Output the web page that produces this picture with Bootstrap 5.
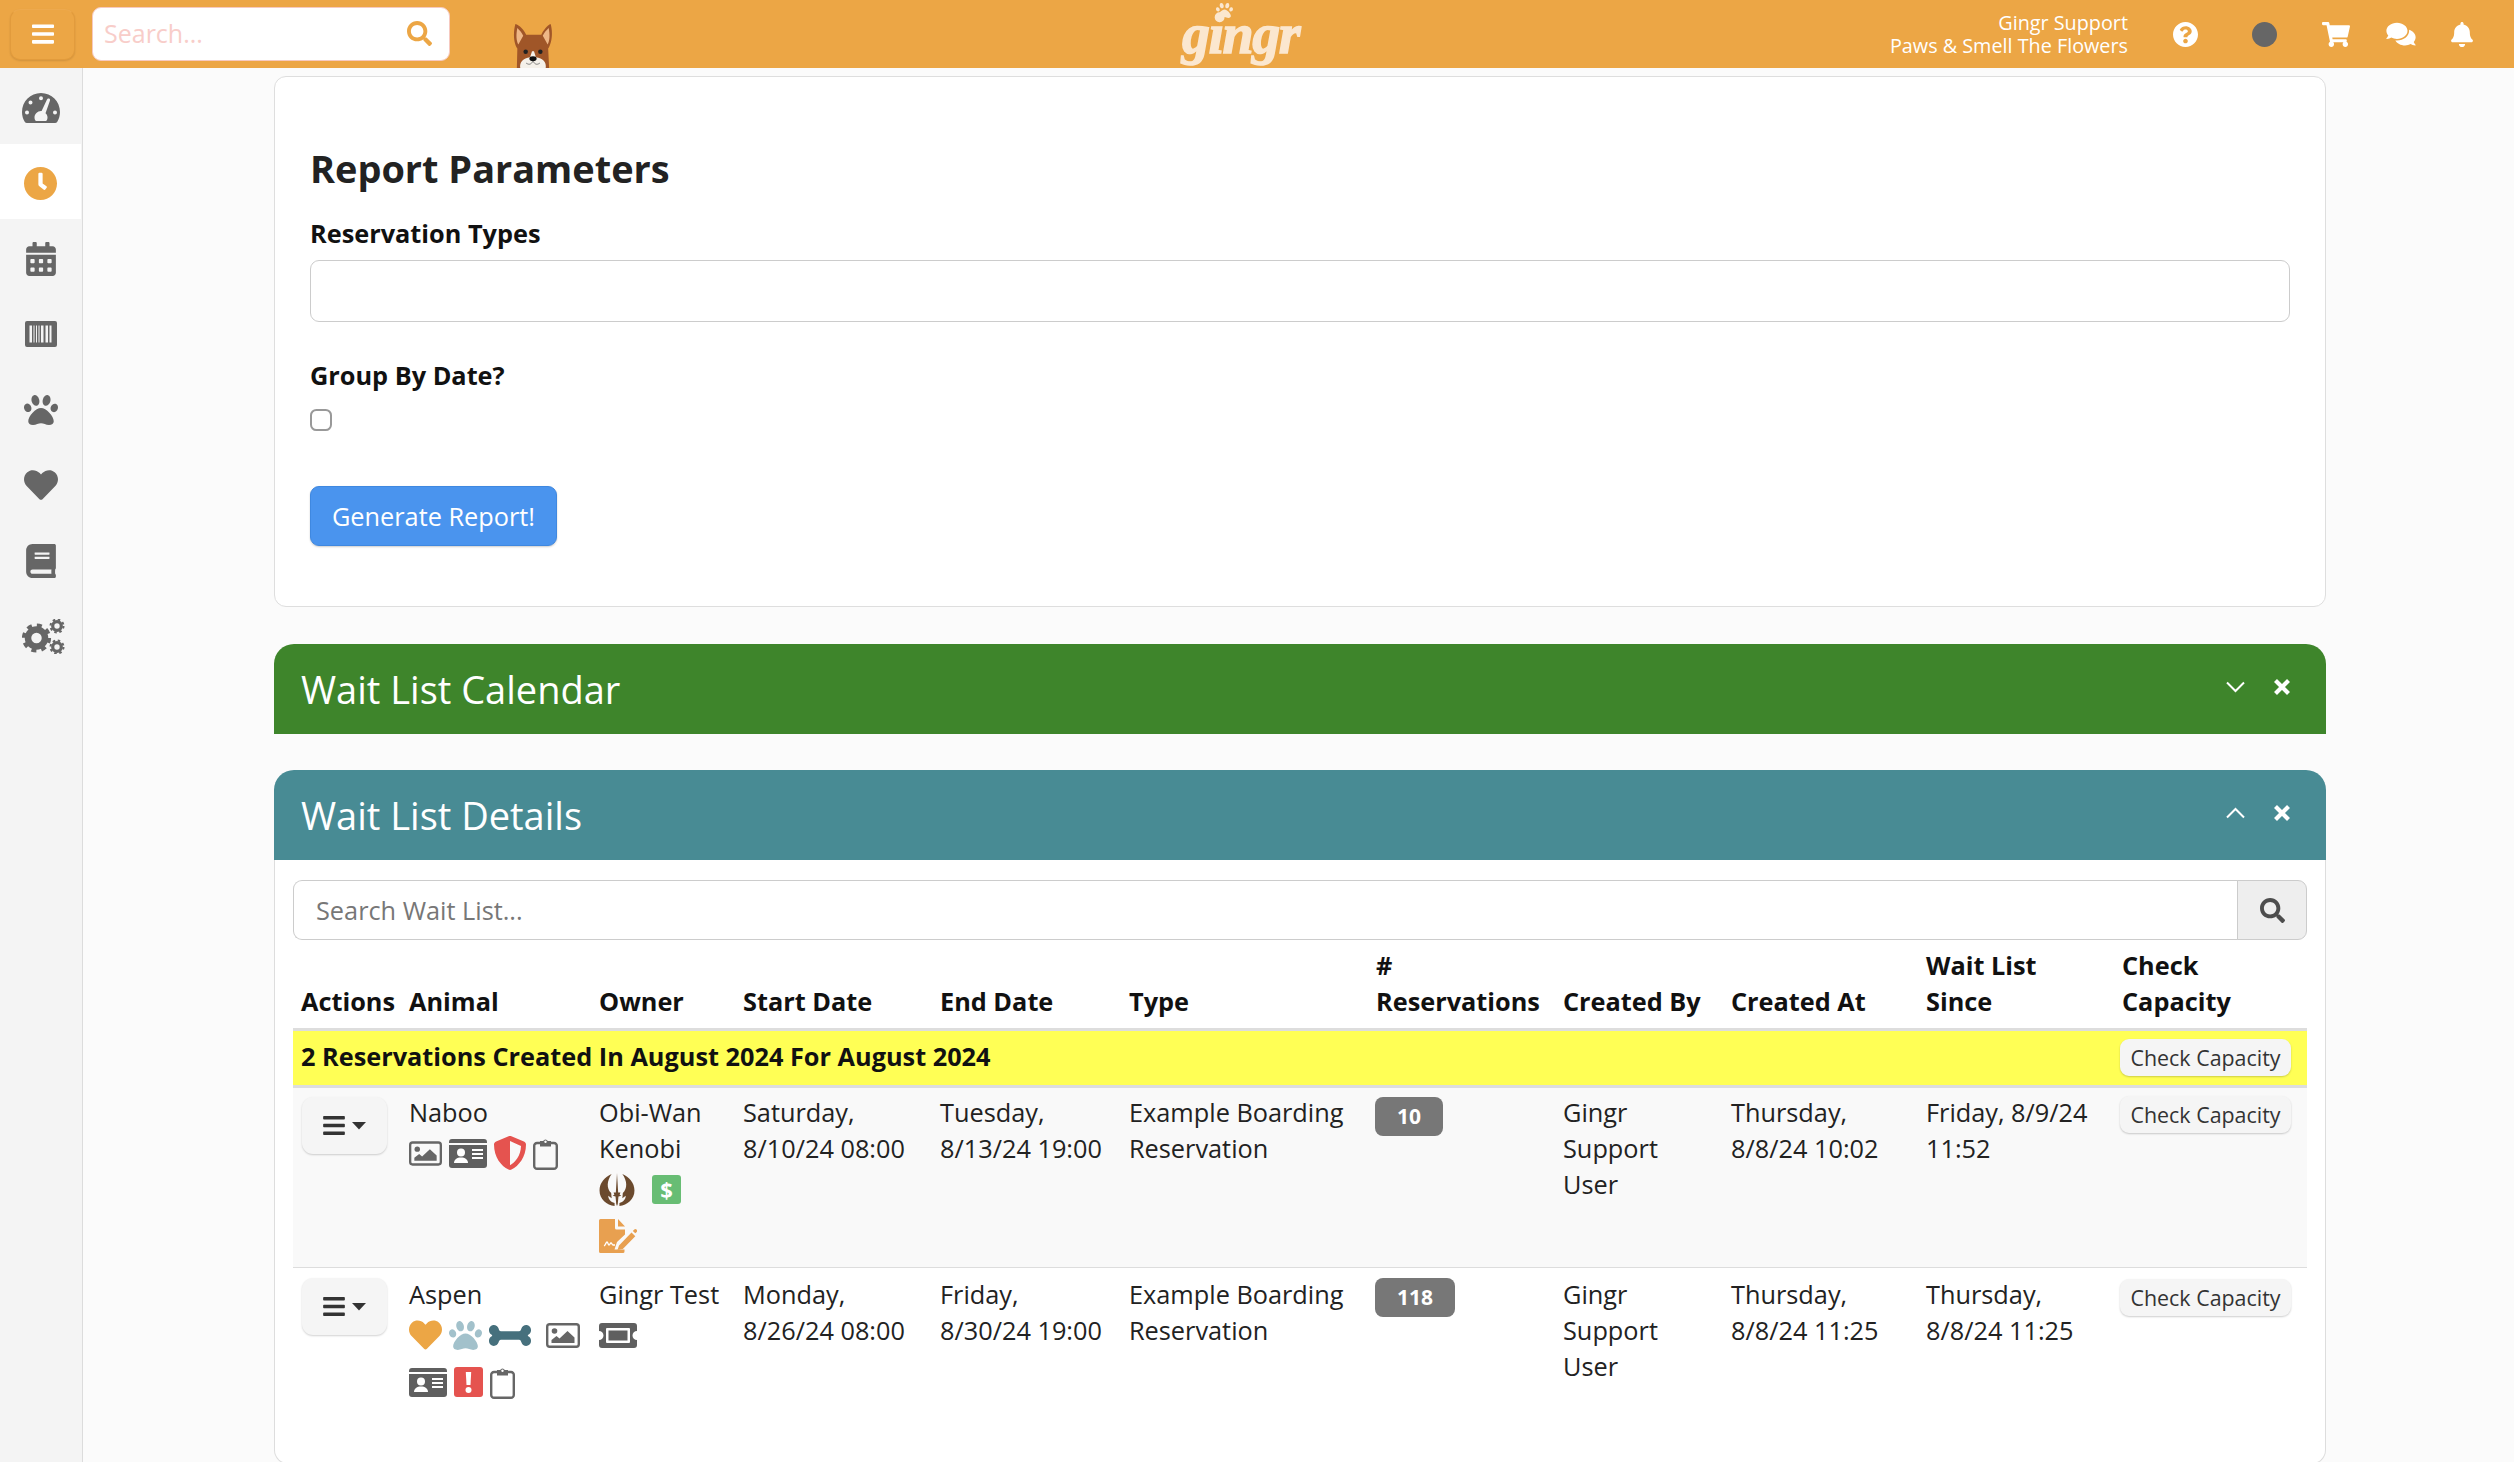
<!DOCTYPE html>
<html lang="en">
<head>
<meta charset="utf-8">
<title>Wait List Report</title>
<link href="https://cdn.jsdelivr.net/npm/bootstrap@5.3.0/dist/css/bootstrap.min.css" rel="stylesheet">
<style>
html,body{height:100%}
body{font-family:"Open Sans","Liberation Sans",sans-serif;font-size:25.3px;line-height:36px;color:#222;background:#fbfbfb;overflow:hidden;display:flex;flex-direction:column;margin:0}
.topbar{height:68px;flex:none;background:#eca645;padding:0;align-items:center;flex-wrap:nowrap;justify-content:flex-start}
.menu-btn{width:65px;height:51px;margin:0 17px 0 10px;background:#eca645;border:1px solid #e29b3c;border-top-color:#eda94e;border-radius:10px;display:flex;align-items:center;justify-content:center;box-shadow:0 1px 2px rgba(0,0,0,.12);padding:0}
.top-search{width:358px;height:54px;background:#fff;border-radius:9px;border:1px solid #f6c9c0;display:flex;align-items:center;justify-content:space-between;padding:0 17px 2px 11px;color:#f8cdc9;font-size:25px}
.dog{margin:23px 0 0 63px;align-self:flex-start}
.logo-wrap{position:absolute;left:1180px;top:0;width:126px;height:66px}
.logo-txt{position:absolute;left:2px;top:6px;font-family:"Liberation Serif",serif;font-style:italic;font-weight:700;font-size:56px;line-height:56px;letter-spacing:-1.5px;color:#fbe7cf;-webkit-text-stroke:1.4px #fbe7cf}
.logo-paw{position:absolute;left:36px;top:3px}
.top-user{margin-left:auto;text-align:right;color:#fff;font-size:19.8px;line-height:23px;margin-right:45px}
.top-icons{display:flex;align-items:center;margin-right:41px}
.ti-q{margin-right:54px}.ti-dot{margin-right:45px}.ti-cart{margin-right:36px}.ti-chat{margin-right:35px}
.shell{flex:1;display:flex;min-height:0}
.side{width:83px;flex:none;background:#f4f4f4;border-right:1px solid #dcdcdc}
.side-item{height:75.5px;display:flex;align-items:center;justify-content:center;padding-top:4px;margin-right:1px}
.side-item.on{background:#fff;padding-top:5px}
.side-cogs{padding-left:5px}
.content{flex:1;min-width:0;padding:8px 188px 0 191px;overflow:hidden}
.param-card{border:1px solid #dedede;border-radius:12px;background:#fff;padding:69px 35px 60px;height:531px;box-shadow:none}
.param-title{font-size:37.9px;line-height:44px;font-weight:700;margin:0 0 25px;color:#222}
.param-label{font-weight:700;font-size:25.3px;line-height:36px;margin:0 0 9px;color:#111;display:block}
.param-input{height:62px;border:1px solid #ccc;border-radius:9px;margin-bottom:35px}
.param-check{width:22px;height:22px;margin:7px 0 55px 0;border:2px solid #999;border-radius:5px;display:block}
.gen-btn{display:block;width:247px;height:60px;background:#4a94ee;border:1px solid #3f88e0;border-radius:9px;color:#fff;font-size:25.3px;padding:1px 0 0;box-shadow:0 1px 2px rgba(0,0,0,.2)}
.panel-card{border:0;border-radius:20px 20px 0 0;background:transparent;margin-top:37px}
.panel-bar{height:90px;padding:0 27px;display:flex;align-items:center;color:#fff;font-size:38px;line-height:44px;border:0;border-radius:20px 20px 0 0}
.panel-bar:first-child{border-radius:20px 20px 0 0}
.bar-green{background:#3e852b}
.bar-teal{background:#488b94}
.bar-ctl{margin-left:auto;display:flex;align-items:center;margin-top:-4px}
.bar-chev{margin-right:29px}
.bar-x{margin-right:9px}
.panel-card+.panel-card{margin-top:36px}
.panel-body{background:#fff;border:1px solid #ddd;border-top:0;border-radius:0 0 14px 14px;padding:20px 18px 0;height:604px}
.wl-group{height:60px}
.wl-input{border:1px solid #ccc;border-right:0;border-radius:9px 0 0 9px;font-size:25.3px;padding:1px 22px 0;color:#666}
.wl-input::placeholder{color:#777}
.wl-btn{width:70px;background:#eee;border:1px solid #ccc;border-radius:0 9px 9px 0;display:flex;align-items:center;justify-content:center;padding:0}
.wl-table{table-layout:fixed;width:2014px;margin:0;font-size:25.3px;line-height:36px;color:#222;border-collapse:collapse}
.wl-table th,.wl-table td{padding:8px 6px 9px 8px;border:0;background:transparent;box-shadow:none;vertical-align:top}
.wl-table thead th{vertical-align:bottom;font-weight:700;color:#111;border-bottom:3px solid #ddd;padding:7px 0 9px 8px;white-space:nowrap}
.wl-table tr.yel td{background:#ffff55;font-weight:700;color:#111;padding:7px 7px 11px 8px;border-bottom:3px solid #ddd;height:57px}
.wl-table tr.yel td.cap{padding:8px 10px 0 6px;font-weight:400}
.wl-table tr.odd td{background:#f9f9f9;border-bottom:1px solid #ddd;padding-top:6px}
.wl-table td.cap{padding:11px 6px 0}
.wl-table tr.odd td.cap{padding:8px 6px 0}
.wl-table td.act{padding:10px 6px 0 9px}
.wl-table tr.odd td.act{padding:9px 6px 0 9px}
.act-btn{width:85px;height:57px;background:#f5f5f5;border:0;border-radius:11px;box-shadow:0 1px 2px rgba(0,0,0,.18);display:flex;align-items:center;justify-content:center;gap:7px;padding:0}
.cap-btn{display:block;width:171px;height:37px;background:#f5f5f5;border:0;border-radius:9px;box-shadow:0 1px 2px rgba(0,0,0,.2);font-size:21.4px;line-height:36px;color:#333;padding:0;white-space:nowrap}
.count-pill{display:inline-block;background:#777;color:#fff;font-weight:700;font-size:21px;line-height:39px;height:39px;padding:0 22px;border-radius:8px;margin:2px 0 0 -1px}
.odd .count-pill{margin-top:3px}
.ic-wrap{display:flex;flex-wrap:wrap;column-gap:7px;row-gap:3px;margin-top:1px}
.ic-narrow{max-width:110px}
.ibx{height:44px;display:flex;align-items:center}
.gap-big{margin-right:8px}
.gap-jedi{margin-right:10px}
.dollar-box{width:29px;height:29px;background:#68bd74;border-radius:3px;color:#fff;font-weight:700;font-size:22px;line-height:29px;text-align:center;display:block}
.nowrap-cell{white-space:nowrap}
.c1{width:108px}.c2{width:190px}.c3{width:144px}.c4{width:197px}.c5{width:189px}.c6{width:247px}.c7{width:187px}.c8{width:168px}.c9{width:195px}.c10{width:196px}.c11{width:193px}
</style>
</head>
<body>
<svg width="0" height="0" class="position-absolute">
<defs>
<symbol id="i-bars" viewBox="0 60 448 392"><path d="M16 132h416c8.837 0 16-7.163 16-16V76c0-8.837-7.163-16-16-16H16C7.163 60 0 67.163 0 76v40c0 8.837 7.163 16 16 16zm0 160h416c8.837 0 16-7.163 16-16v-40c0-8.837-7.163-16-16-16H16c-8.837 0-16 7.163-16 16v40c0 8.837 7.163 16 16 16zm0 160h416c8.837 0 16-7.163 16-16v-40c0-8.837-7.163-16-16-16H16c-8.837 0-16 7.163-16 16v40c0 8.837 7.163 16 16 16z"/></symbol>
<symbol id="i-search" viewBox="0 0 512 512"><path d="M505 442.7L405.3 343c-4.5-4.5-10.6-7-17-7H372c27.6-35.3 44-79.7 44-128C416 93.1 322.9 0 208 0S0 93.1 0 208s93.1 208 208 208c48.3 0 92.7-16.4 128-44v16.3c0 6.4 2.5 12.5 7 17l99.7 99.7c9.4 9.4 24.6 9.4 33.9 0l28.3-28.3c9.4-9.4 9.4-24.6.1-34zM208 336c-70.7 0-128-57.2-128-128 0-70.7 57.2-128 128-128 70.7 0 128 57.2 128 128 0 70.7-57.2 128-128 128z"/></symbol>
<symbol id="i-q" viewBox="8 8 496 496"><path d="M504 256c0 136.997-111.043 248-248 248S8 392.997 8 256C8 119.083 119.043 8 256 8s248 111.083 248 248zM262.655 90c-54.497 0-89.255 22.957-116.549 63.758-3.536 5.286-2.353 12.415 2.715 16.258l34.699 26.31c5.205 3.947 12.621 3.008 16.665-2.122 17.864-22.658 30.113-35.797 57.303-35.797 20.429 0 45.698 13.148 45.698 32.958 0 14.976-12.363 22.667-32.534 33.976C247.128 238.528 216 254.941 216 296v4c0 6.627 5.373 12 12 12h56c6.627 0 12-5.373 12-12v-1.333c0-28.462 83.186-29.647 83.186-106.667 0-58.002-60.165-102-116.531-102zM256 338c-25.365 0-46 20.635-46 46 0 25.364 20.635 46 46 46s46-20.636 46-46c0-25.365-20.635-46-46-46z"/></symbol>
<symbol id="i-cart" viewBox="0 0 576 512"><path d="M528.12 301.319l47.273-208C578.806 78.301 567.391 64 551.99 64H159.208l-9.166-44.81C147.758 8.021 137.93 0 126.529 0H24C10.745 0 0 10.745 0 24v16c0 13.255 10.745 24 24 24h69.883l70.248 343.435C147.325 417.1 136 435.222 136 456c0 30.928 25.072 56 56 56s56-25.072 56-56c0-15.674-6.447-29.835-16.824-40h209.647C430.447 426.165 424 440.326 424 456c0 30.928 25.072 56 56 56s56-25.072 56-56c0-22.172-12.888-41.332-31.579-50.405l5.517-24.276c3.413-15.018-8.002-29.319-23.403-29.319H218.117l-6.545-32h293.145c11.206 0 20.92-7.754 23.403-18.681z"/></symbol>
<symbol id="i-comments" viewBox="0 0 576 512"><path d="M416 192c0-88.4-93.1-160-208-160S0 103.6 0 192c0 34.3 14.1 65.9 38 92-13.4 30.2-35.5 54.2-35.8 54.5-2.2 2.3-2.8 5.7-1.5 8.7S4.8 352 8 352c36.6 0 66.9-12.3 88.7-25 32.2 15.7 70.3 25 111.3 25 114.9 0 208-71.6 208-160zm122 220c23.9-26 38-57.7 38-92 0-66.9-53.5-124.2-129.3-148.1.9 6.6 1.3 13.3 1.3 20.1 0 105.9-107.7 192-240 192-10.8 0-21.3-.8-31.7-1.9C207.8 439.6 281.8 480 368 480c41 0 79.1-9.2 111.3-25 21.8 12.7 52.1 25 88.7 25 3.2 0 6.1-1.9 7.3-4.8 1.3-2.9.7-6.3-1.5-8.7-.3-.3-22.4-24.2-35.8-54.5z"/></symbol>
<symbol id="i-bell" viewBox="0 0 448 512"><path d="M224 512c35.32 0 63.97-28.65 63.97-64H160.03c0 35.35 28.65 64 63.97 64zm215.39-149.71c-19.32-20.76-55.47-51.99-55.47-154.29 0-77.7-54.48-139.9-127.94-155.16V32c0-17.67-14.32-32-31.98-32s-31.98 14.33-31.98 32v20.84C118.56 68.1 64.08 130.3 64.08 208c0 102.3-36.15 133.53-55.47 154.29-6 6.45-8.66 14.16-8.61 21.71.11 16.4 12.98 32 32.1 32h383.8c19.12 0 32-15.6 32.1-32 .05-7.55-2.61-15.27-8.61-21.71z"/></symbol>
<symbol id="i-heart" viewBox="0 30 512 452"><path d="M462.3 62.6C407.5 15.9 326 24.3 275.7 76.2L256 96.5l-19.7-20.3C186.1 24.3 104.5 15.9 49.7 62.6c-62.8 53.6-66.1 149.8-9.9 207.9l193.5 199.8c12.5 12.9 32.8 12.9 45.3 0l193.5-199.8c56.3-58.1 53-154.3-9.8-207.9z"/></symbol>
<symbol id="i-paw" viewBox="0 32 512 448"><path d="M256 224c-79.41 0-192 122.76-192 200.25 0 34.9 26.81 55.75 71.74 55.75 48.84 0 81.09-25.08 120.26-25.08 39.51 0 71.85 25.08 120.26 25.08 44.93 0 71.74-20.85 71.74-55.75C448 346.76 335.41 224 256 224zm-147.28-12.61c-10.4-34.65-42.44-57.09-71.56-50.13-29.12 6.96-44.29 40.69-33.89 75.34 10.4 34.65 42.44 57.09 71.56 50.13 29.12-6.96 44.29-40.69 33.89-75.34zm84.72-20.78c30.94-8.14 46.42-49.94 34.58-93.36s-46.52-72.01-77.46-63.87-46.42 49.94-34.58 93.36c11.84 43.42 46.52 72.01 77.46 63.87zm281.39-29.34c-29.12-6.96-61.15 15.48-71.56 50.13-10.4 34.65 4.77 68.38 33.89 75.34 29.12 6.96 61.15-15.48 71.56-50.13 10.4-34.65-4.77-68.38-33.89-75.34zm-156.27 29.34c30.94 8.14 65.62-20.45 77.46-63.87 11.84-43.42-3.64-85.21-34.58-93.36s-65.62 20.45-77.46 63.87c-11.84 43.42 3.64 85.22 34.58 93.36z"/></symbol>
<symbol id="i-bone" viewBox="0 96 640 320"><path d="M598.88 244.56c25.2-12.6 41.12-38.36 41.12-66.53v-7.64C640 129.3 606.7 96 565.61 96c-32.02 0-60.44 20.49-70.57 50.86-7.68 23.03-11.6 45.14-38.11 45.14H183.06c-27.38 0-31.58-25.54-38.11-45.14C134.83 116.49 106.4 96 74.39 96 33.3 96 0 129.3 0 170.39v7.64c0 28.17 15.92 53.93 41.12 66.53 9.43 4.71 9.43 18.17 0 22.88C15.92 279.04 0 304.8 0 332.97v7.64C0 381.7 33.3 415 74.38 415c32.02 0 60.44-20.49 70.57-50.86 7.68-23.03 11.6-45.14 38.11-45.14h273.87c27.38 0 31.58 25.54 38.11 45.14C505.17 395.51 533.6 416 565.61 416c41.08 0 74.38-33.3 74.38-74.39v-7.64c0-28.18-15.92-53.93-41.12-66.53-9.42-4.71-9.42-18.17.01-22.88z"/></symbol>
<symbol id="i-book" viewBox="0 0 448 512"><path d="M448 360V24c0-13.3-10.7-24-24-24H96C43 0 0 43 0 96v320c0 53 43 96 96 96h328c13.3 0 24-10.7 24-24v-16c0-7.5-3.5-14.3-8.9-18.7-4.2-15.4-4.2-59.3 0-74.7 5.4-4.3 8.9-11.1 8.9-18.6zM128 134c0-3.3 2.7-6 6-6h212c3.3 0 6 2.7 6 6v20c0 3.3-2.7 6-6 6H134c-3.3 0-6-2.7-6-6v-20zm0 64c0-3.3 2.7-6 6-6h212c3.3 0 6 2.7 6 6v20c0 3.3-2.7 6-6 6H134c-3.3 0-6-2.7-6-6v-20zm253.4 250H96c-17.7 0-32-14.3-32-32 0-17.6 14.4-32 32-32h285.4c-1.9 17.1-1.9 46.9 0 64z"/></symbol>
<symbol id="i-clock" viewBox="8 8 496 496"><path d="M256,8C119,8,8,119,8,256S119,504,256,504,504,393,504,256,393,8,256,8Zm92.49,313h0l-20,25a16,16,0,0,1-22.49,2.5h0l-67-49.72a40,40,0,0,1-15-31.23V112a16,16,0,0,1,16-16h32a16,16,0,0,1,16,16V256l58,42.5A16,16,0,0,1,348.49,321Z"/></symbol>
<symbol id="i-cal" viewBox="0 0 448 512"><path d="M0 464c0 26.5 21.5 48 48 48h352c26.5 0 48-21.5 48-48V192H0v272zm320-196c0-6.6 5.4-12 12-12h40c6.6 0 12 5.4 12 12v40c0 6.6-5.4 12-12 12h-40c-6.6 0-12-5.4-12-12v-40zm0 128c0-6.6 5.4-12 12-12h40c6.6 0 12 5.4 12 12v40c0 6.6-5.4 12-12 12h-40c-6.6 0-12-5.4-12-12v-40zM192 268c0-6.6 5.4-12 12-12h40c6.6 0 12 5.4 12 12v40c0 6.6-5.4 12-12 12h-40c-6.6 0-12-5.4-12-12v-40zm0 128c0-6.6 5.4-12 12-12h40c6.6 0 12 5.4 12 12v40c0 6.6-5.4 12-12 12h-40c-6.6 0-12-5.4-12-12v-40zM64 268c0-6.6 5.4-12 12-12h40c6.6 0 12 5.4 12 12v40c0 6.6-5.4 12-12 12H76c-6.6 0-12-5.4-12-12v-40zm0 128c0-6.6 5.4-12 12-12h40c6.6 0 12 5.4 12 12v40c0 6.6-5.4 12-12 12H76c-6.6 0-12-5.4-12-12v-40zM400 64h-48V16c0-8.8-7.2-16-16-16h-32c-8.8 0-16 7.2-16 16v48H160V16c0-8.8-7.2-16-16-16h-32c-8.8 0-16 7.2-16 16v48H48C21.5 64 0 85.5 0 112v48h448v-48c0-26.5-21.5-48-48-48z"/></symbol>
<symbol id="i-tach" viewBox="0 0 38 30"><path fill-rule="evenodd" d="M19 0C8.5 0 0 8.5 0 19c0 3.5 1 7 2.7 9.8.5.8 1.300 1.200 2.300 1.200h28c1 0 1.800-.4 2.300-1.200C37 26 38 22.500 38 19 38 8.500 29.500 0 19 0zM19 3.200a2 2 0 1 1 0 4 2 2 0 0 1 0-4zM8.500 7.500a2 2 0 1 1 0 4 2 2 0 0 1 0-4zM5 17.500a2 2 0 1 1 0 4 2 2 0 0 1 0-4zm28 0a2 2 0 1 1 0 4 2 2 0 0 1 0-4zM27 5.500c.9.3 1.300 1.200 1 2l-4.500 12.800c1.200 1 2 2.500 2 4.200 0 1-.2 2-.7 2.800-.2.400-.6.700-1 .700H14.200c-.4 0-.8-.3-1-.7-.5-.8-.7-1.800-.7-2.800 0-3.500 3-6.500 6.500-6.500h.6L25 6.500c.3-.8 1.200-1.300 2-1z"/></symbol>
<symbol id="i-bar" viewBox="0 0 32 26"><path fill-rule="evenodd" d="M2 0h28a2 2 0 0 1 2 2v22a2 2 0 0 1-2 2H2a2 2 0 0 1-2-2V2a2 2 0 0 1 2-2zM4.500 4.500v17h2.500v-17zm4 0v17h1v-17zm2.500 0v17h1v-17zm2.500 0v17h1v-17zm2.500 0v17h2.500v-17zm4.500 0v17h2.500v-17zm4 0v17h2v-17z"/></symbol>
<symbol id="i-cogs" viewBox="0 0 43 35"><g fill="none" stroke="currentColor"><circle cx="14.500" cy="19" r="8.500" stroke-width="6.500"/><circle cx="14.500" cy="19" r="12.800" stroke-width="3.600" stroke-dasharray="5 5.050"/><circle cx="35" cy="7" r="4.300" stroke-width="3.200"/><circle cx="35" cy="7" r="6.500" stroke-width="2" stroke-dasharray="2.500 2.600"/><circle cx="35" cy="28" r="4.300" stroke-width="3.200"/><circle cx="35" cy="28" r="6.500" stroke-width="2" stroke-dasharray="2.500 2.600"/></g></symbol>
<symbol id="i-img" viewBox="0 0 34 25"><rect x="1.200" y="1.200" width="31.600" height="22.600" rx="2.500" fill="none" stroke="#666" stroke-width="2.400"/><circle cx="8.500" cy="8" r="2.800" fill="#666"/><path fill="#666" d="M5.500 20v-3l5-4 3 2.500 8-7.500 7 6.500V20z"/></symbol>
<symbol id="i-idc" viewBox="0 0 38 29"><path fill="#5f5f5f" d="M0 6h38v20a3 3 0 0 1-3 3H3a3 3 0 0 1-3-3zM3 0h32a3 3 0 0 1 3 3v1H0V3a3 3 0 0 1 3-3z"/><circle cx="12" cy="13.500" r="4" fill="#fff"/><path fill="#fff" d="M5 24c0-3.500 3-5.500 7-5.500s7 2 7 5.500z"/><path stroke="#fff" stroke-width="1.800" d="M23 11h11M23 15h11M23 19h11"/></symbol>
<symbol id="i-shield" viewBox="0 0 32 34"><path fill="#e5534f" d="M16 0c.5 0 1 .1 1.400.3l12.500 5.200C31.100 6 32 7.200 32 8.500 32 21 24.700 30 17.500 33.600c-1 .5-2 .5-3 0C7 30 0 21 0 8.500 0 7.200.9 6 2.100 5.500L14.600.3C15 .1 15.500 0 16 0zm0 5v24.200c5-2.700 10.800-9.200 11-19.200z"/></symbol>
<symbol id="i-clip" viewBox="0 0 25 33"><path fill="none" stroke="#666" stroke-width="2.400" d="M7 6H4a2.800 2.800 0 0 0-2.800 2.800V29A2.800 2.800 0 0 0 4 31.800h17a2.800 2.800 0 0 0 2.800-2.800V8.800A2.800 2.800 0 0 0 21 6h-3"/><path fill="#666" d="M7 4h3.200a2.500 2.500 0 0 1 4.600 0H18v5.500H7z"/><circle cx="12.500" cy="4.800" r="1.200" fill="#fff"/></symbol>
<symbol id="i-tick" viewBox="0 0 38 25"><path fill="#5f5f5f" fill-rule="evenodd" d="M3 0h32a3 3 0 0 1 3 3v5a4.500 4.500 0 0 0 0 9v5a3 3 0 0 1-3 3H3a3 3 0 0 1-3-3v-5a4.500 4.500 0 0 0 0-9V3a3 3 0 0 1 3-3zm5 5a1 1 0 0 0-1 1v13a1 1 0 0 0 1 1h22a1 1 0 0 0 1-1V6a1 1 0 0 0-1-1zm1.500 2.500h19v10h-19z"/></symbol>
<symbol id="i-jedi" viewBox="0 0 36 34"><path fill="#6b4a2e" d="M12.500 1C5.500 4 0 10 0 18c0 9 7.500 15 15.500 16v-3c-4-1-6.500-4-6.500-7.500l3.500 2.500-.5-5.500C7 16 7.500 8 12.500 1zM23.500 1C30.500 4 36 10 36 18c0 9-7.500 15-15.500 16v-3c4-1 6.500-4 6.500-7.500L23.500 26l.5-5.500C29 16 28.500 8 23.500 1z"/><path fill="#6b4a2e" d="M18 0l1.200 20h2.300l-.8 2.500 1.800 1-3 .8-.7 7.700-.8 2-.8-2-.7-7.700-3-.8 1.800-1-.8-2.500h2.300z"/></symbol>
<symbol id="i-sign" viewBox="0 0 38 34"><path fill="#e8a050" d="M1.500 0H16v9a1.500 1.500 0 0 0 1.500 1.500H26v5L18 23l-2.500 7.500h10v2A1.500 1.500 0 0 1 24 34H1.500A1.500 1.500 0 0 1 0 32.500v-31A1.500 1.500 0 0 1 1.500 0zM19 0l7 7.500h-7z"/><path fill="#e8a050" d="M20 26.500L32.500 13.500l3.800 3.800L23.800 30 18.500 31zM33.800 12l1.500-1.500c.7-.7 1.600-.7 2.200 0l.2.200c.6.700.6 1.500 0 2.200l-1.400 1.400z"/><path fill="none" stroke="#fff" stroke-width="1.300" d="M5 27c1.500-.5 2-4 3-4s1 3 2 3 1-2 2-2 1 2 2 2h2"/></symbol>
<symbol id="i-alert" viewBox="0 0 29 30"><rect width="29" height="30" rx="3" fill="#e5534f"/><path fill="#fff" d="M11.800 5h5.400l-.7 13h-4z"/><circle cx="14.500" cy="23" r="3" fill="#fff"/></symbol>
<symbol id="i-dog" viewBox="0 0 40 46"><path fill="#a05628" d="M2 1C-1 12 1 22 4 26l-.5 20h33l-1-20c3-4 5.500-15 2.500-25-3 1-8 7-9.500 11H13C11 7 6 2 2 1z"/><path fill="#eeb786" d="M4 5C2.500 12 3 18 5 22l5-9C9 10 6 7 4 5zM36 5c1.500 7 1 13-1 17l-5-9c1-3 4-6 6-8z"/><path fill="#f5f1ea" d="M7 46c-1-6 3-10 10-11l2-6h2l2 6c7 1 11 5 10 11z"/><circle cx="12.500" cy="29.500" r="2.300" fill="#222"/><circle cx="27.500" cy="29.500" r="2.300" fill="#222"/><ellipse cx="20" cy="36.500" rx="3.700" ry="2.500" fill="#111"/><path fill="none" stroke="#666" stroke-width=".8" d="M13 41c3 2 5 1.500 7-2 2 3.500 4 4 7 2"/></symbol>
</defs>
</svg>

<nav class="navbar topbar position-relative">
  <button class="menu-btn" type="button" aria-label="Menu"><svg width="22" height="20" fill="#fff"><use href="#i-bars"/></svg></button>
  <div class="top-search"><span>Search...</span><svg width="25" height="25" fill="#eca645"><use href="#i-search"/></svg></div>
  <svg class="dog" width="40" height="45"><use href="#i-dog"/></svg>
  <div class="logo-wrap">
    <span class="logo-txt">gingr</span>
    <svg class="logo-paw" width="17" height="15" fill="#fbe7cf"><use href="#i-paw"/></svg>
  </div>
  <div class="top-user">Gingr Support<br>Paws &amp; Smell The Flowers</div>
  <div class="top-icons">
    <svg width="25" height="25" fill="#fff" class="ti-q"><use href="#i-q"/></svg>
    <svg width="25" height="25" fill="#666" class="ti-dot"><circle cx="12.500" cy="12.500" r="12.500"/></svg>
    <svg width="28" height="25" fill="#fff" class="ti-cart"><use href="#i-cart"/></svg>
    <svg width="30" height="26" fill="#fff" class="ti-chat"><use href="#i-comments"/></svg>
    <svg width="22" height="25" fill="#fff"><use href="#i-bell"/></svg>
  </div>
</nav>

<div class="shell">
  <aside class="side">
    <div class="side-item"><svg width="38" height="30" fill="#666"><use href="#i-tach"/></svg></div>
    <div class="side-item on"><svg width="33" height="33" fill="#eca645"><use href="#i-clock"/></svg></div>
    <div class="side-item"><svg width="30" height="34" fill="#666"><use href="#i-cal"/></svg></div>
    <div class="side-item"><svg width="32" height="26" fill="#666"><use href="#i-bar"/></svg></div>
    <div class="side-item"><svg width="34" height="30" fill="#666"><use href="#i-paw"/></svg></div>
    <div class="side-item"><svg width="34" height="30" fill="#666"><use href="#i-heart"/></svg></div>
    <div class="side-item"><svg width="30" height="34" fill="#666"><use href="#i-book"/></svg></div>
    <div class="side-item side-cogs"><svg width="43" height="35" color="#666"><use href="#i-cogs"/></svg></div>
  </aside>

  <main class="content">
    <section class="card param-card">
      <h3 class="param-title">Report Parameters</h3>
      <label class="param-label">Reservation Types</label>
      <input class="form-control param-input" type="text" aria-label="Reservation Types">
      <label class="param-label">Group By Date?</label>
      <input class="form-check-input param-check" type="checkbox" aria-label="Group By Date?">
      <button class="btn btn-primary gen-btn" type="button">Generate Report!</button>
    </section>

    <section class="card panel-card">
      <div class="card-header panel-bar bar-green">
        <span>Wait List Calendar</span>
        <span class="bar-ctl">
          <svg class="bar-chev" width="19" height="12" fill="none" stroke="#fff" stroke-width="2"><path d="M1 1.500l8.500 8.500L18 1.500"/></svg>
          <svg class="bar-x" width="16" height="16" viewBox="0 0 16 16" fill="none" stroke="#fff" stroke-width="4.200"><path d="M1.500 1.500l13 13M14.500 1.500l-13 13"/></svg>
        </span>
      </div>
    </section>

    <section class="card panel-card">
      <div class="card-header panel-bar bar-teal">
        <span>Wait List Details</span>
        <span class="bar-ctl">
          <svg class="bar-chev" width="19" height="12" fill="none" stroke="#fff" stroke-width="2"><path d="M1 10.500L9.500 2 18 10.500"/></svg>
          <svg class="bar-x" width="16" height="16" viewBox="0 0 16 16" fill="none" stroke="#fff" stroke-width="4.200"><path d="M1.500 1.500l13 13M14.500 1.500l-13 13"/></svg>
        </span>
      </div>
      <div class="panel-body">
        <div class="input-group wl-group">
          <input class="form-control wl-input" type="text" placeholder="Search Wait List...">
          <button class="btn wl-btn" type="button" aria-label="Search"><svg width="25" height="25" fill="#4d4d4d"><use href="#i-search"/></svg></button>
        </div>
        <table class="table wl-table">
          <colgroup><col class="c1"><col class="c2"><col class="c3"><col class="c4"><col class="c5"><col class="c6"><col class="c7"><col class="c8"><col class="c9"><col class="c10"><col class="c11"></colgroup>
          <thead>
            <tr>
              <th>Actions</th><th>Animal</th><th>Owner</th><th>Start Date</th><th>End Date</th><th>Type</th><th>#<br>Reservations</th><th>Created By</th><th>Created At</th><th>Wait List<br>Since</th><th>Check<br>Capacity</th>
            </tr>
          </thead>
          <tbody>
            <tr class="yel">
              <td colspan="10">2 Reservations Created In August 2024 For August 2024</td>
              <td class="cap"><button class="btn cap-btn" type="button">Check Capacity</button></td>
            </tr>
            <tr class="odd">
              <td class="act"><button class="btn act-btn" type="button" aria-label="Actions"><svg width="22" height="19" fill="#333"><use href="#i-bars"/></svg><svg width="14" height="8" fill="#333"><path d="M0 0h14L7 7.500z"/></svg></button></td>
              <td>Naboo
                <div class="ic-wrap">
                  <span class="ibx"><svg width="33" height="25"><use href="#i-img"/></svg></span>
                  <span class="ibx"><svg width="38" height="29"><use href="#i-idc"/></svg></span>
                  <span class="ibx"><svg width="32" height="34"><use href="#i-shield"/></svg></span>
                  <span class="ibx"><svg width="25" height="33"><use href="#i-clip"/></svg></span>
                </div>
              </td>
              <td>Obi-Wan Kenobi
                <div class="ic-wrap ic-narrow">
                  <span class="ibx gap-jedi"><svg width="36" height="33"><use href="#i-jedi"/></svg></span>
                  <span class="ibx"><span class="dollar-box">$</span></span>
                  <span class="ibx"><svg width="38" height="34"><use href="#i-sign"/></svg></span>
                </div>
              </td>
              <td>Saturday,<br>8/10/24 08:00</td>
              <td>Tuesday,<br>8/13/24 19:00</td>
              <td>Example Boarding Reservation</td>
              <td><span class="count-pill">10</span></td>
              <td>Gingr Support User</td>
              <td>Thursday,<br>8/8/24 10:02</td>
              <td>Friday, 8/9/24 11:52</td>
              <td class="cap"><button class="btn cap-btn" type="button">Check Capacity</button></td>
            </tr>
            <tr>
              <td class="act"><button class="btn act-btn" type="button" aria-label="Actions"><svg width="22" height="19" fill="#333"><use href="#i-bars"/></svg><svg width="14" height="8" fill="#333"><path d="M0 0h14L7 7.500z"/></svg></button></td>
              <td>Aspen
                <div class="ic-wrap">
                  <span class="ibx"><svg width="33" height="30" fill="#eca645"><use href="#i-heart"/></svg></span>
                  <span class="ibx"><svg width="33" height="29" fill="#a2c1cb"><use href="#i-paw"/></svg></span>
                  <span class="ibx gap-big"><svg width="42" height="21" fill="#46707d"><use href="#i-bone"/></svg></span>
                  <span class="ibx"><svg width="34" height="25"><use href="#i-img"/></svg></span>
                  <span class="ibx"><svg width="38" height="29"><use href="#i-idc"/></svg></span>
                  <span class="ibx"><svg width="29" height="30"><use href="#i-alert"/></svg></span>
                  <span class="ibx"><svg width="25" height="33"><use href="#i-clip"/></svg></span>
                </div>
              </td>
              <td><span class="nowrap-cell">Gingr Test</span>
                <div class="ic-wrap">
                  <span class="ibx"><svg width="38" height="25"><use href="#i-tick"/></svg></span>
                </div>
              </td>
              <td>Monday,<br>8/26/24 08:00</td>
              <td>Friday,<br>8/30/24 19:00</td>
              <td>Example Boarding Reservation</td>
              <td><span class="count-pill">118</span></td>
              <td>Gingr Support User</td>
              <td>Thursday,<br>8/8/24 11:25</td>
              <td>Thursday,<br>8/8/24 11:25</td>
              <td class="cap"><button class="btn cap-btn" type="button">Check Capacity</button></td>
            </tr>
          </tbody>
        </table>
      </div>
    </section>
  </main>
</div>
<script src="https://cdn.jsdelivr.net/npm/bootstrap@5.3.0/dist/js/bootstrap.bundle.min.js"></script>
</body>
</html>
